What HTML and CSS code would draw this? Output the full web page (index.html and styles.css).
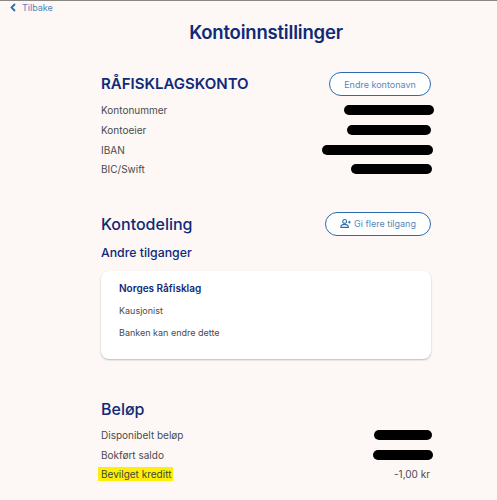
FILE: index.html
```html
<!DOCTYPE html>
<html lang="no">
<head>
    <meta charset="UTF-8">
    <meta name="viewport" content="width=device-width, initial-scale=1.0">
    <title>Kontoinnstillinger</title>
    <link rel="stylesheet" href="styles.css">
</head>
<body>
    <a class="back-link" href="#">
        <svg class="back-icon" width="6" height="9" viewBox="0 0 6 9"><path d="M5 1 1.5 4.500 5 8" fill="none" stroke="#2a6db0" stroke-width="1.8"/></svg>
        Tilbake
    </a>

    <div class="content">
        <h1>Kontoinnstillinger</h1>

        <section class="account">
            <div class="section-head">
                <h2 class="caps">RÅFISKLAGSKONTO</h2>
                <button type="button" class="pill">Endre kontonavn</button>
            </div>
            <div class="row"><span>Kontonummer</span><i class="redact r1"></i></div>
            <div class="row"><span>Kontoeier</span><i class="redact r2"></i></div>
            <div class="row"><span>IBAN</span><i class="redact r3"></i></div>
            <div class="row"><span>BIC/Swift</span><i class="redact r4"></i></div>
        </section>

        <section class="sharing">
            <div class="section-head">
                <h2>Kontodeling</h2>
                <button type="button" class="pill pill-narrow">
                    <svg width="11" height="9" viewBox="0 0 12 10"><circle cx="5" cy="2.700" r="2.100" fill="none" stroke="#2a6db0" stroke-width="1.200"/><path d="M.8 9.300c0-2.500 2-3.300 4.200-3.300s4.200.8 4.200 3.300z" fill="none" stroke="#2a6db0" stroke-width="1.200"/><path d="M8.800 3.500h3M10.300 2v3" stroke="#2a6db0" stroke-width="1.100"/></svg>
                    Gi flere tilgang
                </button>
            </div>
            <h3>Andre tilganger</h3>
            <div class="card">
                <h4>Norges Råfisklag</h4>
                <p>Kausjonist</p>
                <p>Banken kan endre dette</p>
            </div>
        </section>

        <section class="amounts">
            <h2>Beløp</h2>
            <div class="row"><span>Disponibelt beløp</span><i class="redact r5"></i></div>
            <div class="row"><span>Bokført saldo</span><i class="redact r6"></i></div>
            <div class="row"><span class="marked">Bevilget kreditt</span><span class="amount">-1,00 kr</span></div>
        </section>
    </div>
</body>
</html>
```

FILE: styles.css
```css
html, body {
    height: 500px;
    overflow: hidden;
}

body {
    background-color: #fdf8f5;
    border-top: 1px solid #8a8782;
    box-sizing: border-box;
    color: #4a4a4f;
    font-family: Inter, "Liberation Sans", sans-serif;
    margin: 0;
}

.back-link {
    align-items: center;
    color: #4a86bd;
    display: flex;
    font-size: 9px;
    gap: 6px;
    height: 13px;
    margin-left: 10px;
    text-decoration: none;
}

.content {
    display: flex;
    flex-direction: column;
    padding-left: 101px;
    padding-right: 66px;
}

h1 {
    color: #0f2a78;
    font-size: 18.500px;
    font-weight: 600;
    letter-spacing: -0.2px;
    line-height: 28px;
    margin: 4px 0 0;
    text-align: center;
}

.account {
    margin-top: 26px;
}

.sharing {
    margin-top: 32.500px;
}

.amounts {
    margin-top: 38px;
}

.amounts h2 {
    margin-bottom: 4px;
}

.section-head {
    align-items: center;
    display: flex;
    height: 24px;
    justify-content: space-between;
    margin-bottom: 4.500px;
}

h2 {
    color: #0f2a78;
    font-size: 16px;
    font-weight: 500;
    line-height: 24px;
    margin: 0;
}

.caps {
    font-size: 15px;
    font-weight: 600;
}

h3 {
    color: #0f2a78;
    font-size: 12.300px;
    font-weight: 500;
    line-height: 18px;
    margin: 8px 0 9.500px;
}

h4 {
    color: #0f2a78;
    font-size: 10px;
    font-weight: 600;
    line-height: 14px;
    margin: 0 0 10px;
}

.pill {
    align-items: center;
    background-color: #fff;
    border: 1.500px solid #2a6db0;
    border-radius: 12px;
    box-sizing: border-box;
    color: #5a86b8;
    display: flex;
    font-family: Inter, sans-serif;
    font-size: 9px;
    gap: 3px;
    height: 24px;
    justify-content: center;
    padding: 0;
    width: 102px;
}

.pill-narrow {
    width: 106px;
}

.row {
    align-items: center;
    display: flex;
    font-size: 10px;
    height: 19.700px;
    justify-content: space-between;
}

.redact {
    background-color: #000;
    border-radius: 5px;
    display: block;
    height: 10px;
}

.r1 { margin-right: -3px; width: 90px; }
.r2 { margin-right: 0; width: 84px; }
.r3 { margin-right: -2px; width: 111px; }
.r4 { margin-right: -1px; width: 81px; }
.r5 { margin-right: -1px; width: 58px; }
.r6 { margin-right: -2px; width: 60px; }

.card {
    background-color: #fff;
    border-radius: 8px;
    box-shadow: 0 1px 2px rgba(0, 0, 0, 0.25);
    box-sizing: border-box;
    height: 88px;
    padding: 10px 18px;
}

.card p {
    font-size: 9px;
    line-height: 12px;
    margin: 0 0 10px;
}

.marked {
    background-color: #ffee0a;
    color: #3a4a30;
    margin-left: -3px;
    padding: 1px 2px 1px 3px;
}

.amount {
    margin-right: 1px;
}
```
